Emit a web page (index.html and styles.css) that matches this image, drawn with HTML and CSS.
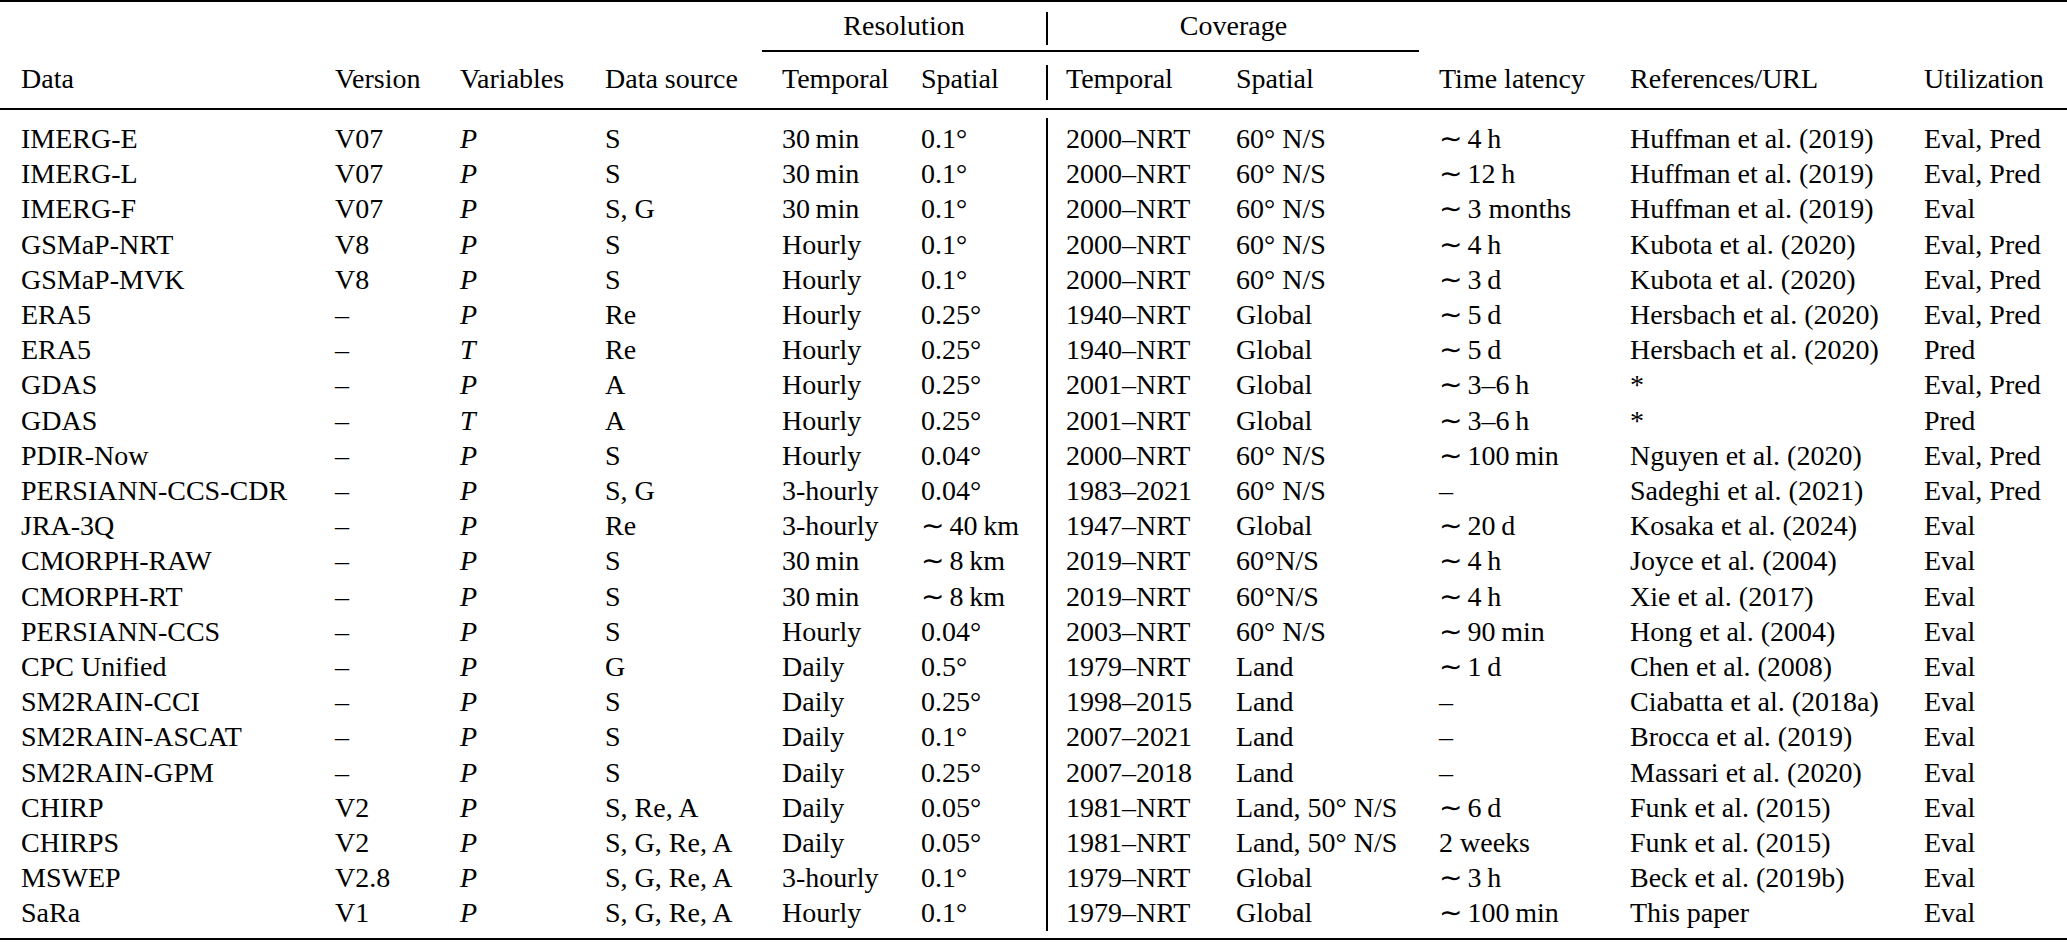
FILE: index.html
```html
<!DOCTYPE html>
<html lang="en">
<head>
<meta charset="utf-8">
<title>Precipitation datasets</title>
<link rel="stylesheet" href="styles.css">
</head>
<body>
<table class="tbl">
<colgroup>
<col class="w-data"><col class="w-ver"><col class="w-var"><col class="w-src">
<col class="w-rt"><col class="w-rs"><col class="w-ct"><col class="w-cs">
<col class="w-lat"><col class="w-ref"><col class="w-use">
</colgroup>
<thead>
<tr class="sp sp-top"><td colspan="11"></td></tr>
<tr class="grp">
<th colspan="4"></th>
<th colspan="2" class="ctr">Resolution</th>
<th colspan="2" class="ctr vr">Coverage</th>
<th colspan="3"></th>
</tr>
<tr class="sp sp-cmid"><td colspan="4"></td><td colspan="4" class="cmid"></td><td colspan="3"></td></tr>
<tr class="sp sp-13"><td colspan="11"></td></tr>
<tr class="hdr">
<th>Data</th><th>Version</th><th>Variables</th><th>Data source</th>
<th>Temporal</th><th>Spatial</th><th class="vr">Temporal</th><th>Spatial</th>
<th>Time latency</th><th>References/URL</th><th>Utilization</th>
</tr>
<tr class="sp sp-mid"><td colspan="11"></td></tr>
</thead>
<tbody>
<tr class="sp sp-8"><td colspan="11"></td></tr>
<tr class="sp sp-4"><td colspan="6"></td><td class="vr"></td><td colspan="4"></td></tr>
<tr><td>IMERG-E</td><td>V07</td><td><i>P</i></td><td>S</td><td>30&thinsp;min</td><td>0.1°</td><td class="vr">2000–NRT</td><td>60° N/S</td><td>∼&thinsp;4&thinsp;h</td><td>Huffman et al. (2019)</td><td>Eval, Pred</td></tr>
<tr><td>IMERG-L</td><td>V07</td><td><i>P</i></td><td>S</td><td>30&thinsp;min</td><td>0.1°</td><td class="vr">2000–NRT</td><td>60° N/S</td><td>∼&thinsp;12&thinsp;h</td><td>Huffman et al. (2019)</td><td>Eval, Pred</td></tr>
<tr><td>IMERG-F</td><td>V07</td><td><i>P</i></td><td>S, G</td><td>30&thinsp;min</td><td>0.1°</td><td class="vr">2000–NRT</td><td>60° N/S</td><td>∼&thinsp;3 months</td><td>Huffman et al. (2019)</td><td>Eval</td></tr>
<tr><td>GSMaP-NRT</td><td>V8</td><td><i>P</i></td><td>S</td><td>Hourly</td><td>0.1°</td><td class="vr">2000–NRT</td><td>60° N/S</td><td>∼&thinsp;4&thinsp;h</td><td>Kubota et al. (2020)</td><td>Eval, Pred</td></tr>
<tr><td>GSMaP-MVK</td><td>V8</td><td><i>P</i></td><td>S</td><td>Hourly</td><td>0.1°</td><td class="vr">2000–NRT</td><td>60° N/S</td><td>∼&thinsp;3&thinsp;d</td><td>Kubota et al. (2020)</td><td>Eval, Pred</td></tr>
<tr><td>ERA5</td><td>–</td><td><i>P</i></td><td>Re</td><td>Hourly</td><td>0.25°</td><td class="vr">1940–NRT</td><td>Global</td><td>∼&thinsp;5&thinsp;d</td><td>Hersbach et al. (2020)</td><td>Eval, Pred</td></tr>
<tr><td>ERA5</td><td>–</td><td><i>T</i></td><td>Re</td><td>Hourly</td><td>0.25°</td><td class="vr">1940–NRT</td><td>Global</td><td>∼&thinsp;5&thinsp;d</td><td>Hersbach et al. (2020)</td><td>Pred</td></tr>
<tr><td>GDAS</td><td>–</td><td><i>P</i></td><td>A</td><td>Hourly</td><td>0.25°</td><td class="vr">2001–NRT</td><td>Global</td><td>∼&thinsp;3–6&thinsp;h</td><td>*</td><td>Eval, Pred</td></tr>
<tr><td>GDAS</td><td>–</td><td><i>T</i></td><td>A</td><td>Hourly</td><td>0.25°</td><td class="vr">2001–NRT</td><td>Global</td><td>∼&thinsp;3–6&thinsp;h</td><td>*</td><td>Pred</td></tr>
<tr><td>PDIR-Now</td><td>–</td><td><i>P</i></td><td>S</td><td>Hourly</td><td>0.04°</td><td class="vr">2000–NRT</td><td>60° N/S</td><td>∼&thinsp;100&thinsp;min</td><td>Nguyen et al. (2020)</td><td>Eval, Pred</td></tr>
<tr><td>PERSIANN-CCS-CDR</td><td>–</td><td><i>P</i></td><td>S, G</td><td>3-hourly</td><td>0.04°</td><td class="vr">1983–2021</td><td>60° N/S</td><td>–</td><td>Sadeghi et al. (2021)</td><td>Eval, Pred</td></tr>
<tr><td>JRA-3Q</td><td>–</td><td><i>P</i></td><td>Re</td><td>3-hourly</td><td>∼&thinsp;40&thinsp;km</td><td class="vr">1947–NRT</td><td>Global</td><td>∼&thinsp;20&thinsp;d</td><td>Kosaka et al. (2024)</td><td>Eval</td></tr>
<tr><td>CMORPH-RAW</td><td>–</td><td><i>P</i></td><td>S</td><td>30&thinsp;min</td><td>∼&thinsp;8&thinsp;km</td><td class="vr">2019–NRT</td><td>60°N/S</td><td>∼&thinsp;4&thinsp;h</td><td>Joyce et al. (2004)</td><td>Eval</td></tr>
<tr><td>CMORPH-RT</td><td>–</td><td><i>P</i></td><td>S</td><td>30&thinsp;min</td><td>∼&thinsp;8&thinsp;km</td><td class="vr">2019–NRT</td><td>60°N/S</td><td>∼&thinsp;4&thinsp;h</td><td>Xie et al. (2017)</td><td>Eval</td></tr>
<tr><td>PERSIANN-CCS</td><td>–</td><td><i>P</i></td><td>S</td><td>Hourly</td><td>0.04°</td><td class="vr">2003–NRT</td><td>60° N/S</td><td>∼&thinsp;90&thinsp;min</td><td>Hong et al. (2004)</td><td>Eval</td></tr>
<tr><td>CPC Unified</td><td>–</td><td><i>P</i></td><td>G</td><td>Daily</td><td>0.5°</td><td class="vr">1979–NRT</td><td>Land</td><td>∼&thinsp;1&thinsp;d</td><td>Chen et al. (2008)</td><td>Eval</td></tr>
<tr><td>SM2RAIN-CCI</td><td>–</td><td><i>P</i></td><td>S</td><td>Daily</td><td>0.25°</td><td class="vr">1998–2015</td><td>Land</td><td>–</td><td>Ciabatta et al. (2018a)</td><td>Eval</td></tr>
<tr><td>SM2RAIN-ASCAT</td><td>–</td><td><i>P</i></td><td>S</td><td>Daily</td><td>0.1°</td><td class="vr">2007–2021</td><td>Land</td><td>–</td><td>Brocca et al. (2019)</td><td>Eval</td></tr>
<tr><td>SM2RAIN-GPM</td><td>–</td><td><i>P</i></td><td>S</td><td>Daily</td><td>0.25°</td><td class="vr">2007–2018</td><td>Land</td><td>–</td><td>Massari et al. (2020)</td><td>Eval</td></tr>
<tr><td>CHIRP</td><td>V2</td><td><i>P</i></td><td>S, Re, A</td><td>Daily</td><td>0.05°</td><td class="vr">1981–NRT</td><td>Land, 50° N/S</td><td>∼&thinsp;6&thinsp;d</td><td>Funk et al. (2015)</td><td>Eval</td></tr>
<tr><td>CHIRPS</td><td>V2</td><td><i>P</i></td><td>S, G, Re, A</td><td>Daily</td><td>0.05°</td><td class="vr">1981–NRT</td><td>Land, 50° N/S</td><td>2 weeks</td><td>Funk et al. (2015)</td><td>Eval</td></tr>
<tr><td>MSWEP</td><td>V2.8</td><td><i>P</i></td><td>S, G, Re, A</td><td>3-hourly</td><td>0.1°</td><td class="vr">1979–NRT</td><td>Global</td><td>∼&thinsp;3&thinsp;h</td><td>Beck et al. (2019b)</td><td>Eval</td></tr>
<tr><td>SaRa</td><td>V1</td><td><i>P</i></td><td>S, G, Re, A</td><td>Hourly</td><td>0.1°</td><td class="vr">1979–NRT</td><td>Global</td><td>∼&thinsp;100&thinsp;min</td><td>This paper</td><td>Eval</td></tr>
<tr class="sp sp-bot"><td colspan="11"></td></tr>
</tbody>
</table>
</body>
</html>
```
FILE: styles.css
```css
html, body {
  margin: 0;
  padding: 0;
  background: #fff;
}

body {
  font-family: "Liberation Serif", "Times New Roman", serif;
  font-size: 28px;
  color: #000;
}

.tbl {
  width: 2067px;
  table-layout: fixed;
  border-collapse: separate;
  border-spacing: 0;
}

.w-data { width: 315px; }
.w-ver  { width: 125px; }
.w-var  { width: 145px; }
.w-src  { width: 177px; }
.w-rt   { width: 139px; }
.w-rs   { width: 145px; }
.w-ct   { width: 170px; }
.w-cs   { width: 203px; }
.w-lat  { width: 191px; }
.w-ref  { width: 294px; }
.w-use  { width: 163px; }

.tbl th,
.tbl td {
  padding: 0 0 0 20px;
  text-align: left;
  font-weight: normal;
  white-space: nowrap;
  vertical-align: top;
}

.tbl th:first-child,
.tbl td:first-child {
  padding-left: 21px;
}

.tbl .vr {
  border-left: 2px solid #000;
  padding-left: 18px;
}

.tbl .ctr {
  text-align: center;
  padding-left: 0;
}

.tbl .ctr.vr {
  padding-left: 0;
}

.grp th { height: 33px; line-height: 27px; }
.hdr th { height: 35px; line-height: 27px; }
.tbl tbody tr td { height: 35.2px; line-height: 35.2px; }

.tbl tr.sp td {
  padding: 0;
  font-size: 0;
  line-height: 0;
}

.tbl tr.sp-top td { height: 10px; border-top: 2px solid #000; }
.tbl tr.sp-cmid td { height: 5px; }
.tbl tr.sp-cmid td.cmid { border-bottom: 2px solid #000; }
.tbl tr.sp-13 td { height: 13px; }
.tbl tr.sp-mid td { height: 8px; border-bottom: 2px solid #000; }
.tbl tbody tr.sp-8 td { height: 8px; }
.tbl tbody tr.sp-4 td { height: 3px; }
.tbl tbody tr.sp-bot td { height: 7px; border-bottom: 2px solid #000; }
```
